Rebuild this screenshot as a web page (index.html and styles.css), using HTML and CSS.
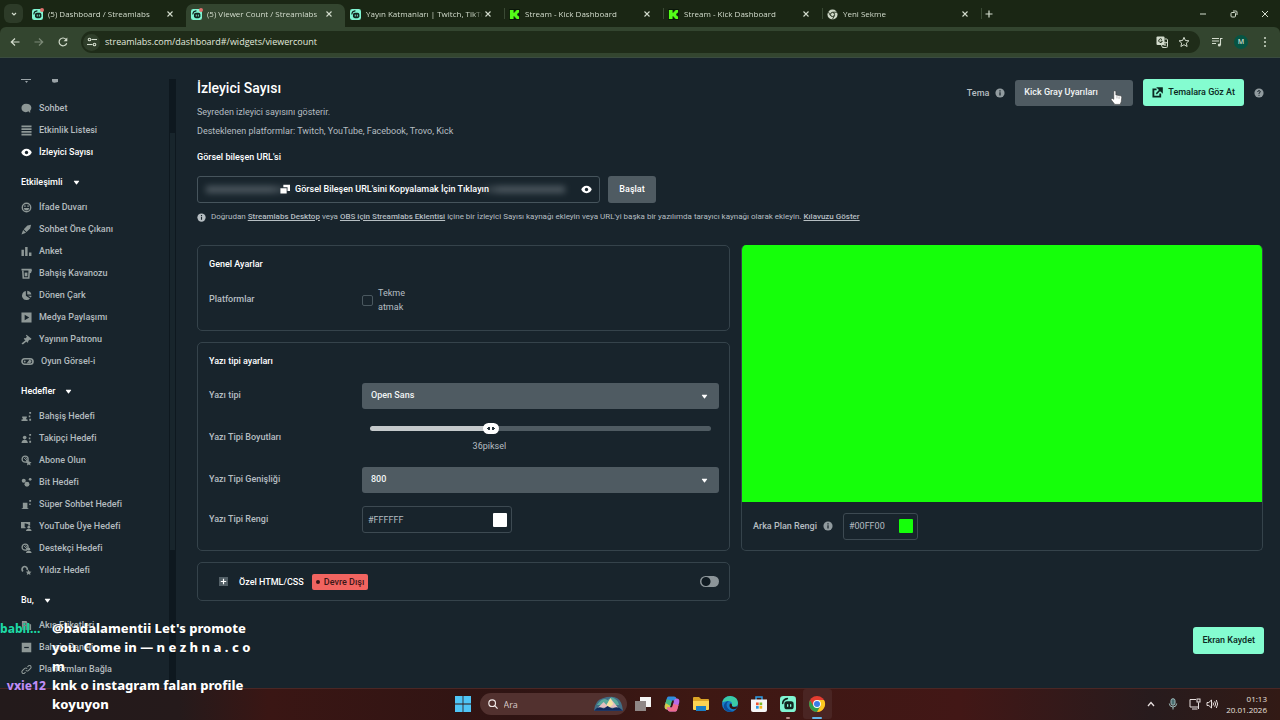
FILE: index.html
```html
<!DOCTYPE html>
<html lang="tr">
<head>
<meta charset="utf-8">
<title>Viewer Count / Streamlabs</title>
<meta name="viewport" content="width=device-width, initial-scale=1">
<link rel="stylesheet" href="styles.css">
</head>
<body>
<svg class="defs" aria-hidden="true">
  <symbol id="streamlabs" viewBox="0 0 24 24"><rect width="24" height="24" rx="5" fill="#80f5d2"/><path d="M4 11a8 8 0 0 1 7-7" fill="none" stroke="#12251f" stroke-width="2.4" stroke-linecap="round"/><rect x="6.500" y="8" width="14" height="12" rx="4" fill="#12251f"/><path d="M11.500 13v2.500M16 13v2.500" stroke="#80f5d2" stroke-width="2" stroke-linecap="round"/></symbol>
  <symbol id="kick" viewBox="0 0 12 12"><rect width="12" height="12" rx="1" fill="#0a160a"/><path d="M1 1h4v3h1V3h1V2h1V1h3v3h-1v1H9v2h1v1h1v3H8v-1H7V9H6V8H5v3H1z" fill="#53fc18"/></symbol>
  <symbol id="chrome-gray" viewBox="0 0 24 24"><circle cx="12" cy="12" r="11" fill="#cfd8c8"/><path d="M12 7h10M7.600 14.500 2.800 6M16.400 14.500 11.500 23" stroke="#1a2614" stroke-width="1.800"/><circle cx="12" cy="12" r="4.500" fill="#cfd8c8" stroke="#1a2614" stroke-width="2"/></symbol>
  <symbol id="close" viewBox="0 0 10 10"><path d="m2.500 2.500 5 5M7.500 2.500l-5 5" fill="none" stroke="currentColor" stroke-width="1.100"/></symbol>
  <symbol id="caret" viewBox="0 0 8 6"><path d="M1 1h6q.6 0 .2.500L4.500 5q-.5.500-1 0L.8 1.500Q.4 1 1 1z" fill="currentColor"/></symbol>
  <symbol id="info" viewBox="0 0 12 12"><circle cx="6" cy="6" r="5.500" fill="currentColor"/><path d="M6 5.200V9M6 2.800v1.400" stroke="#18242c" stroke-width="1.500"/></symbol>
  <symbol id="eye" viewBox="0 0 12 12"><path d="M6 2C3 2 1 4 .3 6 1 8 3 10 6 10s5-2 5.700-4C11 4 9 2 6 2z" fill="currentColor"/><circle cx="6" cy="6" r="1.800" fill="#18242c"/></symbol>
  <symbol id="people" viewBox="0 0 12 12"><circle cx="4" cy="5" r="2" fill="currentColor"/><path d="M.5 11c0-5 7-5 7 0z" fill="currentColor"/></symbol>
  <symbol id="gauge" viewBox="0 0 12 12"><circle cx="4.500" cy="4.500" r="3.300" fill="none" stroke="currentColor" stroke-width="1.400"/><path d="m3 3 4 4M5 2.500l2 3" stroke="currentColor"/></symbol>
</svg>

<header class="browser">
  <div class="tabstrip">
    <button class="tab-search" aria-label="Sekme ara"><svg viewBox="0 0 10 10"><path d="m3 4 2 2 2-2" fill="none" stroke="currentColor" stroke-width="1.200"/></svg></button>
    <div class="tab"><span class="favicon alert"><svg><use href="#streamlabs"/></svg></span><span class="tab-title">(5) Dashboard / Streamlabs</span><button class="tab-close" aria-label="Kapat"><svg><use href="#close"/></svg></button></div>
    <div class="tab active"><span class="favicon alert"><svg><use href="#streamlabs"/></svg></span><span class="tab-title">(5) Viewer Count / Streamlabs</span><button class="tab-close" aria-label="Kapat"><svg><use href="#close"/></svg></button></div>
    <div class="tab"><span class="favicon"><svg><use href="#streamlabs"/></svg></span><span class="tab-title">Yayın Katmanları | Twitch, TikTo</span><button class="tab-close" aria-label="Kapat"><svg><use href="#close"/></svg></button></div>
    <div class="tab divided"><span class="favicon"><svg><use href="#kick"/></svg></span><span class="tab-title">Stream - Kick Dashboard</span><button class="tab-close" aria-label="Kapat"><svg><use href="#close"/></svg></button></div>
    <div class="tab divided"><span class="favicon"><svg><use href="#kick"/></svg></span><span class="tab-title">Stream - Kick Dashboard</span><button class="tab-close" aria-label="Kapat"><svg><use href="#close"/></svg></button></div>
    <div class="tab divided"><span class="favicon"><svg><use href="#chrome-gray"/></svg></span><span class="tab-title">Yeni Sekme</span><button class="tab-close" aria-label="Kapat"><svg><use href="#close"/></svg></button></div>
    <button class="new-tab divided" aria-label="Yeni sekme"><svg viewBox="0 0 10 10"><path d="M5 1.500v7M1.500 5h7" stroke="currentColor" stroke-width="1.200"/></svg></button>
    <div class="window-controls">
      <button aria-label="Küçült"><svg viewBox="0 0 10 10"><path d="M2 5h6" stroke="currentColor"/></svg></button>
      <button aria-label="Geri yükle"><svg viewBox="0 0 10 10"><rect x="2" y="3.500" width="4.500" height="4.500" rx="1" fill="none" stroke="currentColor"/><path d="M4 2h3q1 0 1 1v3" fill="none" stroke="currentColor"/></svg></button>
      <button aria-label="Pencereyi kapat"><svg viewBox="0 0 10 10"><path d="m2 2 6 6M8 2 2 8" fill="none" stroke="currentColor"/></svg></button>
    </div>
  </div>
  <div class="toolbar">
    <button aria-label="Geri"><svg viewBox="0 0 12 12"><path d="M10.500 6h-8M6 2.500 2.300 6 6 9.500" fill="none" stroke="currentColor" stroke-width="1.200"/></svg></button>
    <button class="dim" aria-label="İleri"><svg viewBox="0 0 12 12"><path d="M1.500 6h8M6 2.500 9.700 6 6 9.500" fill="none" stroke="currentColor" stroke-width="1.200"/></svg></button>
    <button aria-label="Yenile"><svg viewBox="0 0 12 12"><path d="M9.700 7.200A3.900 3.900 0 1 1 9 3.400" fill="none" stroke="currentColor" stroke-width="1.200"/><path d="M10.300 1.500v3.700H6.600z" fill="currentColor"/></svg></button>
    <div class="omnibox">
      <span class="site-info"><svg viewBox="0 0 12 12"><g fill="none" stroke="currentColor" stroke-width="1.100"><circle cx="3.500" cy="3.500" r="1.300"/><path d="M5.500 3.500H11"/><circle cx="8.500" cy="8.500" r="1.300"/><path d="M1 8.500h5.500"/></g></svg></span>
      <input class="url" aria-label="Adres" value="streamlabs.com/dashboard#/widgets/viewercount">
      <button aria-label="Çevir"><svg viewBox="0 0 12 12"><rect x=".5" y=".5" width="8" height="8.500" rx="1" fill="currentColor"/><path d="M6 3.600a1.800 1.800 0 1 0 .3 1.600H4.700" fill="none" stroke="#1f2c19"/><path d="M8.500 3h2q1 0 1 1v6.500q0 1-1 1h-4L5.500 9" fill="none" stroke="currentColor"/><path d="M7 6.500h4M9 5.500v1M10.300 6.500Q9.500 9 7.500 10M8 7.500q1 1.800 2.500 2.500" fill="none" stroke="currentColor" stroke-width=".8"/></svg></button>
      <button aria-label="Yer işareti"><svg viewBox="0 0 12 12"><path d="m6 1.300 1.400 3.200 3.500.3-2.600 2.300.8 3.400L6 8.700l-3.100 1.800.8-3.400L1.100 4.800l3.500-.3z" fill="none" stroke="currentColor"/></svg></button>
    </div>
    <button aria-label="Medya"><svg viewBox="0 0 12 12"><path d="M1 2.500h7M1 5h7M1 7.500h4M11.500 2.500h-2V9" fill="none" stroke="currentColor" stroke-width="1.100"/><circle cx="8.300" cy="9" r="1.500" fill="currentColor"/></svg></button>
    <button class="avatar" aria-label="Profil">M</button>
    <button aria-label="Menü"><svg viewBox="0 0 12 12" fill="currentColor"><circle cx="6" cy="2" r="1"/><circle cx="6" cy="6" r="1"/><circle cx="6" cy="10" r="1"/></svg></button>
  </div>
</header>

<div class="page">
  <aside class="sidebar">
    <nav class="menu">
      <div class="cut-row"><svg viewBox="0 0 36 4" fill="currentColor"><path d="M0 0h10v1H0zM4 2h3L5.500 4zM31 0h6v3q-6 2-6-1z"/></svg></div>
      <a href="#"><svg viewBox="0 0 12 12" fill="currentColor"><path d="M5.500.8C2.500.8.5 2.800.5 5.500S2.600 10 5 10q1.500 0 3-1l2 2V8.500Q11.500 7 11.300 5 11 .8 5.500.8z"/></svg>Sohbet</a>
      <a href="#"><svg viewBox="0 0 12 12"><path d="M.5 1.500h11M.5 4.500h11M.5 7.500h11M.5 10.500h11" stroke="currentColor" stroke-width="1.700"/></svg>Etkinlik Listesi</a>
      <a href="#" class="current"><svg><use href="#eye"/></svg>İzleyici Sayısı</a>
      <button class="group">Etkileşimli<svg><use href="#caret"/></svg></button>
      <a href="#"><svg viewBox="0 0 12 12"><circle cx="6" cy="6" r="4.600" fill="none" stroke="currentColor" stroke-width="1.500"/><path d="M3 6.500h6Q8.500 9.300 6 9.300T3 6.500z" fill="currentColor"/><path d="M4.300 3.500v2M7.700 3.500v2" stroke="currentColor" stroke-width="1.300"/></svg>İfade Duvarı</a>
      <a href="#"><svg viewBox="0 0 12 12" fill="currentColor"><path d="m11 .7-4 1-4 4L6 8.800l4-4zM2.300 6.500.5 11.500l5-2z"/></svg>Sohbet Öne Çıkanı</a>
      <a href="#"><svg viewBox="0 0 12 12" fill="currentColor"><path d="M.5 4h2.700v7H.5zM4.500 1h2.700v10H4.500zM8.700 7h2.700v4H8.700z"/></svg>Anket</a>
      <a href="#"><svg viewBox="0 0 12 12"><path d="M.5 1.800h11M2 3l.5 8h6L9 3M7 2l4 .5-1 3" fill="none" stroke="currentColor" stroke-width="1.700"/><path d="M4 5h3v4H4z" fill="currentColor"/></svg>Bahşiş Kavanozu</a>
      <a href="#"><svg viewBox="0 0 12 12" fill="currentColor"><path d="M5.300 1v5.300l4.500 3A5 5 0 1 1 5.300 1z"/><path d="M6.800.8q4 .5 4.500 4.200H6.800zM7.500 6.300h4q0 1.200-.8 2z"/></svg>Dönen Çark</a>
      <a href="#"><svg viewBox="0 0 12 12"><path fill-rule="evenodd" d="M.5.500h11v11H.5zM4 3v6l5-3z" fill="currentColor"/></svg>Medya Paylaşımı</a>
      <a href="#"><svg viewBox="0 0 12 12" fill="currentColor"><path d="m6 .8 5.500 4.500-1.200 1.300-1-.4-1.600 1.600.3 1-1 .8L3 5.300l1-1 1 .3L6.500 3 5.300 1.700zM4.500 7 6 8.300l-4 3.200L.5 10.300z"/></svg>Yayının Patronu</a>
      <a href="#"><svg class="wide" viewBox="0 0 14 12"><rect x="1" y="3" width="12" height="6" rx="3" fill="none" stroke="currentColor" stroke-width="1.800"/><circle cx="4" cy="6" r="1" fill="currentColor"/><path d="m7 8 3-4M9 8l2-3" stroke="currentColor" stroke-width="1.500"/></svg>Oyun Görsel-i</a>
      <button class="group">Hedefler<svg><use href="#caret"/></svg></button>
      <a href="#"><svg viewBox="0 0 12 12" fill="currentColor"><path d="M.5 11V9.200h1.200L2 7.500h-.7V6h5v1.500h-.7l.4 1.700h1.200V11zM9 1h2v2H9zM8.500 5h1.700v1.700H8.500zM9 8.500h2v2H9z"/></svg>Bahşiş Hedefi</a>
      <a href="#"><svg viewBox="0 0 12 12" fill="currentColor"><use href="#people"/><path d="M9 1h2v2H9zM8.500 5h1.700v1.700H8.500zM9 8.500h2v2H9z"/></svg>Takipçi Hedefi</a>
      <a href="#"><svg viewBox="0 0 12 12" fill="currentColor"><use href="#gauge"/><path d="m8.500 5.500.9 2 2.100.2-1.500 1.500.4 2.200-1.900-1.100-2 1.100.5-2.200-1.600-1.500 2.200-.2z"/></svg>Abone Olun</a>
      <a href="#"><svg viewBox="0 0 12 12" fill="currentColor"><circle cx="3" cy="4" r="2.200"/><circle cx="6.500" cy="8" r="2.700"/><circle cx="10" cy="2.500" r="1.500"/></svg>Bit Hedefi</a>
      <a href="#"><svg viewBox="0 0 12 12" fill="currentColor"><path d="M2 4h5v6h1v1H.8v-1H2zM9 1h2v2H9zM9 5h1.500v1.500H9z"/></svg>Süper Sohbet Hedefi</a>
      <a href="#"><svg viewBox="0 0 12 12" fill="currentColor"><path d="M0 1h10v4H8V3.500L4 2.500v4l1 .3V8H0z"/><circle cx="8.500" cy="6.700" r="1.500"/><path d="M5.500 11c0-3.500 6-3.500 6 0z"/></svg>YouTube Üye Hedefi</a>
      <a href="#"><svg viewBox="0 0 12 12" fill="currentColor"><use href="#gauge"/><circle cx="8.500" cy="6.700" r="1.500"/><path d="M5.500 11c0-3.500 6-3.500 6 0z"/></svg>Destekçi Hedefi</a>
      <a href="#"><svg viewBox="0 0 12 12" fill="currentColor"><path d="M2 7Q.3 4.500 2 2.500 4 .8 6 2.500 7.500 4 6.500 5.500" fill="none" stroke="currentColor" stroke-width="1.800"/><path d="m8.300 5 .9 2 2.300.3-1.600 1.500.4 2.200-2-1.100-2 1.100.5-2.200-1.600-1.500 2.200-.2z"/></svg>Yıldız Hedefi</a>
      <button class="group">Bu,<svg><use href="#caret"/></svg></button>
      <a href="#"><svg viewBox="0 0 12 12" fill="currentColor"><path d="M1 1h5l1 2 4 2v6H1z"/></svg>Akış Etiketleri</a>
      <a href="#"><svg viewBox="0 0 12 12"><path d="M.8.800h10.400v10.400H.8z" fill="currentColor"/><path d="M3.500 6h5" stroke="#18242c" stroke-width="1.300"/></svg>Bahşiş Paneli</a>
      <a href="#"><svg viewBox="0 0 12 12" fill="none" stroke="currentColor" stroke-width="1.200"><path d="M5 8.800 3.800 10Q2 11 1.200 9.500.5 8.300 1.500 7.300L4 4.800q1.500-1 2.800.3M7 3.200 8.200 2Q10 1 10.800 2.500q.7 1.200-.3 2.200L8 7.200Q6.500 8.200 5.200 7"/></svg>Platformları Bağla</a>
    </nav>
    <div class="scrollbar"><div class="thumb"></div></div>
  </aside>

  <main class="content">
    <div class="head">
      <div>
        <h1>İzleyici Sayısı</h1>
        <p>Seyreden izleyici sayısını gösterir.</p>
        <p>Desteklenen platformlar: Twitch, YouTube, Facebook, Trovo, Kick</p>
      </div>
      <div class="theme">
        <label for="theme">Tema</label>
        <svg class="info"><use href="#info"/></svg>
        <div class="theme-select">
          <select id="theme"><option>Kick Gray Uyarıları</option></select>
          <svg class="hand" viewBox="0 0 12 16"><path d="M3 1.200q1.200-1.200 2.300 0v4l5.200 1q1.300.3 1.200 1.800l-.5 4.500-1.200 3H4.200l-4-5q-.3-1.700 1.300-1.500l1.500 1z" fill="#fff" stroke="#333" stroke-width=".6"/><path d="M6.500 6.500v2.500M8.800 7v2.500" stroke="#777" stroke-width=".6"/></svg>
        </div>
        <button class="primary browse"><svg viewBox="0 0 12 12"><path d="M5 2.500H1.500v8H9V7" fill="none" stroke="currentColor" stroke-width="2"/><path d="M4.700 7.500 9.500 2.500M6.500 1H11v4.500z" fill="currentColor" stroke="currentColor" stroke-width="1.600"/></svg>Temalara Göz At</button>
        <svg class="info help" viewBox="0 0 12 12"><circle cx="6" cy="6" r="5.500" fill="currentColor"/><path d="M4.400 4.700Q4.500 3.200 6 3.200t1.600 1.400Q7.500 5.600 6 6v1M6 8.200v1.200" fill="none" stroke="#18242c" stroke-width="1.200"/></svg>
      </div>
    </div>

    <h2 class="url-label">Görsel bileşen URL'si</h2>
    <div class="url-row">
      <div class="url-field">
        <span class="secret" aria-hidden="true"></span>
        <button class="copy"><svg viewBox="0 0 12 12" fill="currentColor"><path d="M4 1h8v7.500H9V4H4zM.5 5H8v6.500H.5z"/></svg>Görsel Bileşen URL'sini Kopyalamak İçin Tıklayın</button>
        <button class="reveal" aria-label="Göster"><svg><use href="#eye"/></svg></button>
      </div>
      <button class="secondary">Başlat</button>
    </div>
    <p class="hint"><svg><use href="#info"/></svg><span>Doğrudan <a href="#">Streamlabs Desktop</a> veya <a href="#">OBS için Streamlabs Eklentisi</a> içine bir İzleyici Sayısı kaynağı ekleyin veya URL'yi başka bir yazılımda tarayıcı kaynağı olarak ekleyin. <a href="#">Kılavuzu Göster</a></span></p>

    <div class="columns">
      <div class="settings">
        <section class="card">
          <h2>Genel Ayarlar</h2>
          <div class="field"><span class="name">Platformlar</span><label class="check"><input type="checkbox"><span>Tekme<br>atmak</span></label></div>
        </section>
        <section class="card">
          <h2>Yazı tipi ayarları</h2>
          <div class="fields">
            <div class="field"><label class="name" for="font">Yazı tipi</label><div class="select"><select id="font"><option>Open Sans</option></select><svg><use href="#caret"/></svg></div></div>
            <div class="field"><label class="name" for="size">Yazı Tipi Boyutları</label><div class="slider"><input id="size" type="range" min="10" max="85" value="36"><output for="size">36piksel</output></div></div>
            <div class="field"><label class="name" for="weight">Yazı Tipi Genişliği</label><div class="select"><select id="weight"><option>800</option></select><svg><use href="#caret"/></svg></div></div>
            <div class="field"><label class="name" for="color">Yazı Tipi Rengi</label><div class="color"><input id="color" type="text" value="#FFFFFF"><input type="color" value="#ffffff" aria-label="Yazı tipi rengi seç"></div></div>
          </div>
        </section>
        <section class="card custom">
          <button class="expand" aria-label="Genişlet"><svg viewBox="0 0 10 10"><path d="M5 2v6M2 5h6" stroke="currentColor" stroke-width="1.300"/></svg></button>
          <label for="custom">Özel HTML/CSS</label>
          <span class="badge">Devre Dışı</span>
          <input class="toggle" id="custom" type="checkbox">
        </section>
      </div>
      <section class="preview">
        <div class="screen"></div>
        <div class="preview-bar"><label for="bg">Arka Plan Rengi</label><svg class="info"><use href="#info"/></svg><div class="color small"><input id="bg" type="text" value="#00FF00"><input type="color" value="#15ff0a" aria-label="Arka plan rengi seç"></div></div>
      </section>
    </div>
    <button class="primary save">Ekran Kaydet</button>
  </main>
</div>

<footer class="taskbar">
  <div class="apps">
    <button aria-label="Başlat menüsü"><svg viewBox="0 0 16 16"><path d="M0 0h7.600v7.600H0zM8.400 0H16v7.600H8.400zM0 8.400h7.600V16H0zM8.400 8.400H16V16H8.400z" fill="#4fc5f6"/></svg></button>
    <div class="search"><svg viewBox="0 0 12 12"><circle cx="5" cy="5" r="4" fill="none" stroke="#f2eaea" stroke-width="1.400"/><path d="m8 8 3.500 3.500" stroke="#f2eaea" stroke-width="1.500"/></svg><input aria-label="Ara" placeholder="Ara"><svg class="art" viewBox="0 0 30 16"><path d="M0 15Q1 4 9 2q9-3 15 0 5 3 6 13z" fill="#426e86"/><path d="M3 9Q9 0 14 4l4-3q7 2 8 8z" fill="#59a99b"/><path d="m4 12 6-6 3 3 4-7 8 10z" fill="#e5bfc0"/><path d="m13 9 4-7 3 6-4 4z" fill="#f5e3a0"/><path d="M0 15q5-6 10-2l4-3 5 3q5-4 11 2z" fill="#12295d"/></svg></div>
    <button aria-label="Görev görünümü"><svg viewBox="0 0 16 16"><path d="M5 1h11v10H5z" fill="#f4f4f4"/><path d="M0 5h11v10H0z" fill="#8f8786"/></svg></button>
    <button aria-label="Copilot"><svg viewBox="0 0 16 16"><path d="M4.500.5H10q2 0 2.500 2l.7 2H8L6 11.500q-.7 2-2.700 2Q0 13.500.8 9.500l2-7q.4-2 1.700-2z" fill="#2e8de0"/><path d="M2.300 5 .8 9.500Q0 13.500 3.300 13.500q2 0 2.700-2l1-4z" fill="#d9c94a"/><path d="M1.500 7 3 3l5 2-1.500 5z" fill="#42b883"/><path d="M11.500 15.500H6q-2 0-2.500-2l-.7-2H8l2-7q.7-2 2.700-2 3.300 0 2.500 4l-2 7q-.4 2-1.700 2z" fill="#b76be8"/><path d="M11.500 15.500H6q-2 0-2.500-2l-.7-2H8L9 8l5.500 1-1.300 4.500q-.4 2-1.700 2z" fill="#ee6d8d"/><path d="m8 5.500-1.600 5.500H8l1.600-5.500z" fill="#321512"/></svg></button>
    <button aria-label="Dosyalar"><svg viewBox="0 0 16 16"><path d="M0 2q0-1 1-1h5l2 2h7q1 0 1 1v9H0z" fill="#dca426"/><path d="M0 5h16v8q0 1-1 1H1q-1 0-1-1z" fill="#fcd453"/><path d="M3 10h10v5H3z" fill="#1b7fc4"/></svg></button>
    <button aria-label="Edge"><svg viewBox="0 0 16 16"><circle cx="8" cy="8" r="8" fill="#167cc9"/><path d="M.3 6.500Q2-.2 8.500 0q7 .5 7.500 7-.3 4-5 3.500-2-.5-1-2 .5-3-3-3.500Q3 4.700.3 6.500z" fill="#3bcba5"/><path d="M7 5Q3.500 7 5 11q2 4 7 4-4 2-8-.5Q0 11 3 7q1.500-2 4-2z" fill="#0c4d9a"/><path d="M10 9q-.7 1.500 1.500 2 2.500.3 4-1l-1 2.200Q12 14 9 12.500 6.500 10.500 8 7.500q2-.5 2 1.500z" fill="#321512"/></svg></button>
    <button aria-label="Mağaza"><svg viewBox="0 0 16 16"><path d="M5 4V1h6v3" fill="none" stroke="#2e9fe6" stroke-width="1.500"/><path d="M0 3.500h16V14q0 2-2 2H2q-2 0-2-2z" fill="#f6f6f6"/><path d="M5 6.500h2.700v2.700H5z" fill="#ef5330"/><path d="M8.500 6.500h2.700v2.700H8.500z" fill="#7cb928"/><path d="M5 10h2.700v2.700H5z" fill="#2a9be4"/><path d="M8.500 10h2.700v2.700H8.500z" fill="#f5b51b"/></svg></button>
    <button class="running" aria-label="Streamlabs"><svg><use href="#streamlabs"/></svg></button>
    <button class="running focused" aria-label="Chrome"><svg viewBox="0 0 16 16"><circle cx="8" cy="8" r="8" fill="#e43d30"/><path d="M1 4.200A8 8 0 0 0 8 16l3.500-6H4.500z" fill="#2f9e4d"/><path d="M15 4H8l3.500 6L8 16a8 8 0 0 0 7-12z" fill="#fbc91f"/><circle cx="8" cy="8" r="3.900" fill="#fff"/><circle cx="8" cy="8" r="3" fill="#3b7de8"/></svg></button>
  </div>
  <div class="tray">
    <svg viewBox="0 0 12 12" fill="none" stroke="currentColor"><path d="m3 8 3-3.500L9 8" stroke-width="1.300"/></svg>
    <svg class="mic" viewBox="0 0 12 12" fill="none" stroke="currentColor"><rect x="4" y=".7" width="4" height="6.500" rx="2" fill="#4b6d70"/><path d="M2.300 5.500Q2.500 9 6 9t3.700-3.500M6 9v2.500"/></svg>
    <svg viewBox="0 0 12 12" fill="none" stroke="currentColor"><path d="M7 1.500H1v7.500h8.500V7M3 11h5.500M9.500 4.500V11"/><rect x="8" y="1" width="3" height="3"/></svg>
    <svg viewBox="0 0 12 12" fill="none" stroke="currentColor"><path d="M1 4.500h1.800L5.500 2v8L2.800 7.500H1zM7 4.500q1 1.500 0 3M8.700 3.300q1.800 2.700 0 5.400M10.300 2q2.600 4 0 8"/></svg>
    <div class="clock"><time>01:13</time><time>20.01.2026</time></div>
  </div>
</footer>

<div class="chat">
  <span class="user teal">babil...</span><span>@badalamentii Let's promote<br>you. Come in — n e z h n a . c o<br>m</span>
  <span class="user purple">vxie12</span><span>knk o instagram falan profile<br>koyuyon</span>
</div>
</body>
</html>
```
FILE: styles.css
```css
* { box-sizing: border-box; }
body {
  margin: 0;
  min-height: 100vh;
  display: flex;
  flex-direction: column;
  position: relative;
  background: #18242c;
  color: #b6bec2;
  font: 500 9px/16px Roboto, sans-serif;
  overflow: hidden;
}
button, input, select { font: inherit; color: inherit; margin: 0; border: 0; padding: 0; background: none; outline: 0; }
button { display: flex; align-items: center; justify-content: center; }
svg { display: block; flex: none; overflow: visible; }
h1, h2, p { margin: 0; }
a { color: inherit; }
.defs { position: absolute; width: 0; height: 0; }

/* Browser frame */
.browser { color: #d3dccd; font: 400 9px/14px "Open Sans", sans-serif; background: #1a2614; }
.tabstrip { display: flex; align-items: center; height: 27px; padding-left: 4px; }
.tab-search { width: 19px; height: 19px; margin-right: 4px; border-radius: 6px; background: #2d3b28; }
.tab-search svg, .new-tab svg, .window-controls svg, .tab-close svg { width: 10px; height: 10px; }
.tab { display: flex; align-items: center; flex: 0 1 159px; min-width: 0; height: 23px; margin-top: 4px; padding: 0 11px 3px 5px; }
.tab.active { background: #33452f; border-radius: 7px 7px 0 0; }
.divided { background: linear-gradient(#3a4a34, #3a4a34) 0 4px / 1px 11px no-repeat; }
.favicon { position: relative; width: 11px; height: 11px; margin-right: 5px; flex: none; }
.favicon svg { width: 11px; height: 11px; }
.favicon.alert::after { content: ""; position: absolute; top: -1px; right: -1px; width: 4px; height: 4px; border-radius: 50%; background: #e0716d; }
.tab-title { flex: 1; min-width: 0; overflow: hidden; white-space: nowrap; mask-image: linear-gradient(90deg, #000 92%, transparent); font-size: 8px; }
.new-tab { width: 16px; height: 19px; }
.window-controls { display: flex; margin-left: auto; }
.window-controls button { width: 31px; height: 27px; }
.toolbar { display: flex; align-items: center; height: 31px; padding: 0 3px; background: #33452f; border-radius: 6px 6px 0 0; border-bottom: 1px solid #3a4c40; }
.toolbar svg { width: 12px; height: 12px; }
.toolbar > button { width: 24px; height: 24px; }
.toolbar .dim { opacity: .45; }
.omnibox { display: flex; align-items: center; flex: 1; height: 22px; margin: 0 5px 0 6px; padding: 0 5px 0 2px; border-radius: 11px; background: #1f2c19; }
.omnibox button { width: 22px; height: 20px; }
.site-info { display: grid; place-items: center; width: 17px; height: 17px; margin-right: 5px; border-radius: 50%; background: #2f3e2a; }
.url { flex: 1; min-width: 0; color: #e3eadf; }
.toolbar > .avatar { width: 14px; height: 14px; margin: 0 5px; border-radius: 50%; background: #065443; font-size: 7px; font-weight: 600; }

/* Application */
.page { flex: 1; display: flex; padding-top: 21px; }
.sidebar { display: flex; flex: 0 0 176px; height: 609px; overflow: hidden; }
.menu { flex: 1; padding-left: 21px; }
.cut-row { height: 18px; color: #9aa3a7; }
.cut-row svg { width: 36px; height: 4px; }
.menu a { display: flex; align-items: center; gap: 7px; height: 22px; color: #b3bbbf; text-decoration: none; white-space: nowrap; }
.menu a svg { width: 11px; height: 11px; color: #8d9796; }
.menu a svg.wide { width: 13px; }
.menu a.current, .menu a.current svg { color: #fff; }
.group { height: 33px; gap: 10px; padding: 5px 0 0; color: #fff; }
.group svg { width: 7px; height: 5px; }
.scrollbar { width: 7px; padding: 54px 1px 0; background: #0e181f; }
.thumb { height: 417px; background: #18252c; }
.content { flex: 1; min-width: 0; padding: 0 17px 0 21px; display: flex; flex-direction: column; }
.head { display: flex; justify-content: space-between; align-items: flex-start; }
h1 { color: #fff; font-size: 14px; line-height: 18px; font-weight: 500; margin-bottom: 6px; }
h2 { color: #fff; font-size: 9px; line-height: 16px; font-weight: 500; }
.head p { font-weight: 400; line-height: 19px; }
.theme { display: flex; align-items: center; }
.info { width: 10px; height: 10px; margin: 0 10px 0 6px; color: #919b9f; }
.info.help { margin: 0 -1px 0 10px; }
.theme-select { position: relative; width: 118px; margin-right: 10px; }
select { display: block; width: 100%; height: 26px; padding: 0 9px 2px; border-radius: 3px; background: #4f5b62; color: #f2f5f5; appearance: none; }
.hand { position: absolute; right: 11px; top: 10px; width: 11px; height: 15px; }
.primary { height: 27px; border-radius: 3px; background: #84fcd0; color: #0b2821; }
.browse { gap: 5px; padding: 0 9px 1px; }
.browse svg { width: 11px; height: 11px; }
.url-label { margin-top: 8px; }
.url-row { display: flex; gap: 8px; margin-top: 11px; }
.url-field { position: relative; display: flex; align-items: center; justify-content: center; width: 403px; height: 27px; border: 1px solid #46545c; border-radius: 3px; }
.secret { position: absolute; left: 8px; right: 34px; top: 9px; height: 7px; filter: blur(3px); background: linear-gradient(90deg, #5b666d 18%, #1e2a32 24%, #1e2a32 76%, #5b666d 82%); opacity: .8; }
.copy { gap: 5px; padding-right: 28px; padding-bottom: 1px; color: #fff; position: relative; }
.copy svg { width: 10px; height: 10px; }
.reveal { position: absolute; right: 7px; color: #fff; }
.reveal svg { width: 11px; height: 11px; }
.secondary { width: 48px; height: 27px; padding-bottom: 1px; border-radius: 3px; background: #4f5b62; color: #fff; }
.hint { display: flex; align-items: center; gap: 5px; margin-top: 6px; font-size: 8px; font-weight: 400; }
.hint svg { width: 9px; height: 9px; }
.hint a { font-weight: 500; }
.columns { display: grid; grid-template-columns: 533fr 522fr; gap: 11px; margin-top: 20px; align-items: start; }
.settings { display: grid; gap: 11px; }
.card { border: 1px solid #35434b; border-radius: 5px; padding: 10px 10px 16px 11px; }
.card h2 { margin-bottom: 14px; }
.fields { display: grid; gap: 13px; padding-bottom: 1px; }
.field { display: grid; grid-template-columns: 153px 1fr; align-items: center; }
.field .name { padding-bottom: 2px; }
.check { display: flex; align-items: center; gap: 5px; font-weight: 400; line-height: 14px; }
.check input { width: 11px; height: 11px; border: 1px solid #4a585f; border-radius: 2px; appearance: none; }
.select { position: relative; }
.select svg { position: absolute; right: 11px; top: 11px; width: 7px; height: 5px; color: #fff; }
.slider { padding: 0 8px; text-align: center; font-weight: 400; }
.slider input { display: block; width: 100%; height: 12px; appearance: none; }
.slider input::-webkit-slider-runnable-track { height: 5px; border-radius: 3px; background: linear-gradient(90deg, #c4c9cb 35%, #4f5b62 35%); }
.slider input::-webkit-slider-thumb { width: 16px; height: 11px; margin-top: -3px; border-radius: 6px; appearance: none; background: linear-gradient(#26343b, #26343b) 5px 4px / 2px 3px no-repeat, linear-gradient(#26343b, #26343b) 9px 4px / 2px 3px no-repeat, linear-gradient(#26343b, #26343b) 4px 5px / 2px 1px no-repeat, linear-gradient(#26343b, #26343b) 10px 5px / 2px 1px no-repeat, #fff; }
.slider output { display: block; width: 70%; margin-top: 4px; line-height: 16px; }
.color { display: flex; align-items: center; width: 150px; height: 27px; padding: 0 4px 0 5px; border: 1px solid #3d4a52; border-radius: 3px; font-weight: 400; }
.color input[type="text"] { flex: 1; min-width: 0; }
.color input[type="color"] { width: 14px; height: 14px; appearance: none; }
.color input::-webkit-color-swatch-wrapper { padding: 0; }
.color input::-webkit-color-swatch { border: 0; border-radius: 1px; }
.custom { display: flex; align-items: center; height: 39px; padding: 0 10px; color: #fff; }
.expand { width: 9px; height: 9px; margin: 0 11px 0 11px; background: #536067; }
.expand svg { width: 9px; height: 9px; }
.badge { display: flex; align-items: center; gap: 4px; height: 16px; margin-left: 8px; padding: 0 4px; border-radius: 2px; background: #f16460; color: #3b1718; }
.badge::before { content: ""; width: 4px; height: 4px; border-radius: 50%; background: currentColor; }
.toggle { width: 19px; height: 11px; margin-left: auto; border-radius: 6px; appearance: none; background: radial-gradient(circle at 6px 50%, #101b22 4px, transparent 5px), #8c9599; }
.preview { border: 1px solid #35434b; border-top: 0; border-radius: 5px; overflow: hidden; }
.screen { height: 257px; background: #15ff0a; }
.preview-bar { display: flex; align-items: center; height: 48px; padding-left: 11px; }
.color.small { width: 75px; }
.save { align-self: flex-end; margin: 26px -1px 0 0; padding: 0 9px 1px; }

/* Desktop taskbar */
.taskbar { display: grid; grid-template-columns: 1fr auto 1fr; align-items: center; height: 32px; padding-bottom: 1px; border-top: 1px solid #4a2725; background: linear-gradient(90deg, #231a1b, #251a1b 14%, #3a1614 21%, #2f1413 40%, #3e1813 55%, #421716 75%, #271b1d 90%, #321a15); color: #e8e0df; font: 400 8px/11px "Open Sans", sans-serif; }
.apps { grid-column: 2; display: flex; align-items: center; }
.apps button { position: relative; width: 29px; height: 30px; }
.apps button svg { width: 16px; height: 16px; }
.search { display: flex; align-items: center; gap: 6px; width: 147px; height: 22px; margin: 0 2px; padding: 0 4px 0 8px; border-radius: 11px; background: #52312f; }
.search svg { width: 10px; height: 10px; }
.search .art { width: 29px; height: 16px; }
.search input { flex: 1; min-width: 0; font-size: 9px; }
.search input::placeholder { color: #d7cbca; }
.running::after { content: ""; position: absolute; bottom: 0; width: 4px; height: 2px; border-radius: 1px; background: #b88b87; }
.focused { background: #4a2523; border-radius: 3px; }
.focused::after { width: 10px; background: #62b4ea; }
.tray { grid-column: 3; display: flex; align-items: center; justify-content: flex-end; gap: 5px; padding-right: 13px; }
.tray svg { width: 12px; height: 12px; }
.mic { margin: 0 5px; color: #9fbcbc; }
.clock { display: grid; margin-left: 3px; text-align: right; }

/* Stream chat over the desktop */
.chat { position: absolute; left: 0; bottom: 6px; display: grid; grid-template-columns: 46px 1fr; column-gap: 6px; color: #fff; font: 800 13px/19px "Noto Sans", sans-serif; text-shadow: 0 0 1px #111; pointer-events: none; white-space: nowrap; }
.user { font-size: 12px; justify-self: end; }
.user.teal { color: #1fd6a5; justify-self: start; }
.user.purple { color: #bd8cf5; }
```
